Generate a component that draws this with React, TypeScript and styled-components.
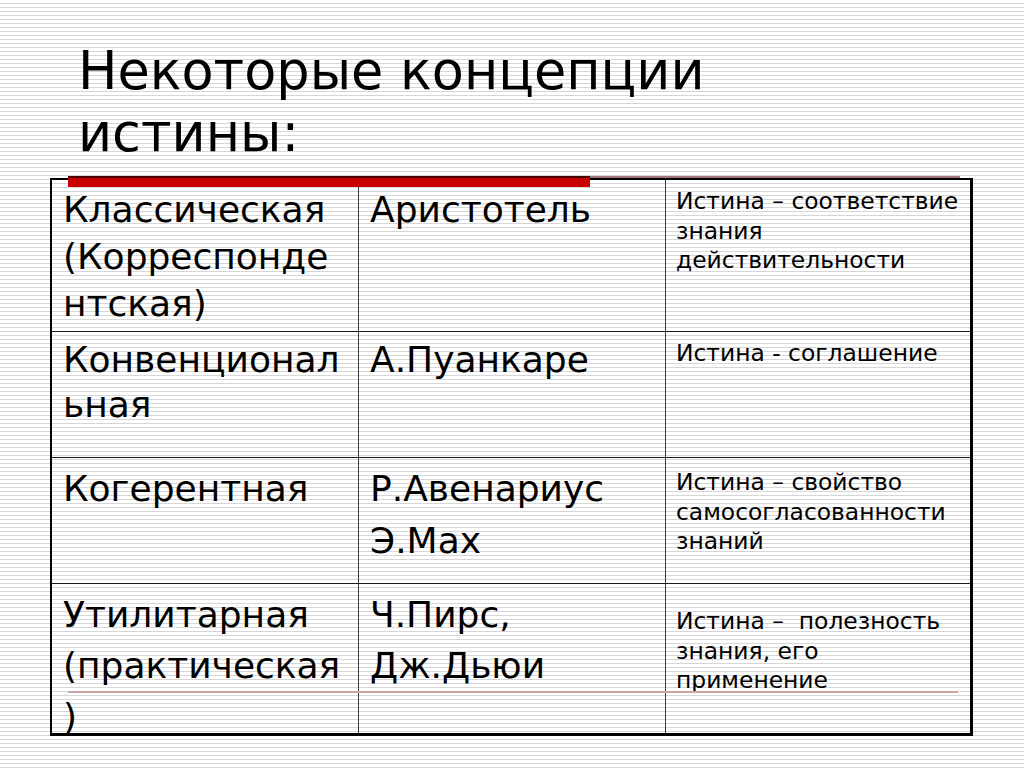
import styled, { createGlobalStyle } from 'styled-components'

const GlobalStyle = createGlobalStyle`
  html, body {
    margin: 0;
    padding: 0;
    background: #fff;
  }
  body {
    font-family: "DejaVu Sans", Verdana, sans-serif;
    color: #000;
  }
`

type Row = {
  concept: string[][]
  authors: string[][]
  idea: string[]
  lead: number
  top: number
  ideaTop: number
}

const rows: Row[] = [
  {
    concept: [['Классическая'], ['(Корреспонде', 'нтская)']],
    authors: [['Аристотель']],
    idea: ['Истина – соответствие', 'знания', 'действительности'],
    lead: 47,
    top: 6,
    ideaTop: 7,
  },
  {
    concept: [['Конвенционал', 'ьная']],
    authors: [['А.Пуанкаре']],
    idea: ['Истина - соглашение'],
    lead: 45,
    top: 5,
    ideaTop: 7,
  },
  {
    concept: [['Когерентная']],
    authors: [['Р.Авенариус'], ['Э.Мах']],
    idea: ['Истина – свойство', 'самосогласованности', 'знаний'],
    lead: 52,
    top: 5,
    ideaTop: 10,
  },
  {
    concept: [['Утилитарная'], ['(практическая', ')']],
    authors: [['Ч.Пирс,'], ['Дж.Дьюи']],
    idea: ['Истина –\u00a0 полезность', 'знания, его', 'применение'],
    lead: 51,
    top: 5,
    ideaTop: 23,
  },
]

export default function App() {
  return (
    <>
      <GlobalStyle />
      <Slide>
        <Title>
          Некоторые концепции
          <br />
          истины:
        </Title>
        <Table>
          {rows.map((row, i) => {
            const lastRow = i === rows.length - 1
            return [
              <Cell key={`c${i}`} $lastRow={lastRow} $lead={row.lead} $top={row.top}>
                {row.concept.map((p, j) => (
                  <Para key={j}>
                    {p.map((line, k) => (
                      <Line key={k}>{line}</Line>
                    ))}
                  </Para>
                ))}
              </Cell>,
              <Cell key={`a${i}`} $lastRow={lastRow} $lead={row.lead} $top={row.top}>
                {row.authors.map((p, j) => (
                  <Para key={j}>
                    {p.map((line, k) => (
                      <Line key={k}>{line}</Line>
                    ))}
                  </Para>
                ))}
              </Cell>,
              <Cell key={`i${i}`} $lastRow={lastRow} $lastCol $small $top={row.ideaTop}>
                {row.idea.map((line, k) => (
                  <Line key={k}>{line}</Line>
                ))}
              </Cell>,
            ]
          })}
        </Table>
        <RedBar />
        <TopRule />
        <BottomRule />
      </Slide>
    </>
  )
}

const Slide = styled.div`
  position: relative;
  width: 1024px;
  height: 768px;
  overflow: hidden;
  box-sizing: border-box;
  padding-top: 40px;
  background: repeating-linear-gradient(
    to bottom,
    #ffffff 0px,
    #ffffff 2.6px,
    #d6d6d6 2.6px,
    #d6d6d6 4px
  );
`

const Title = styled.h1`
  margin: 0 0 0 78px;
  font-size: 52.5px;
  line-height: 62px;
  font-weight: normal;
`

const Table = styled.div`
  display: grid;
  grid-template-columns: 307px 307px 304px;
  grid-template-rows: 152px 126px 126px 149px;
  box-sizing: border-box;
  width: 923px;
  margin: 14px 0 0 50px;
  border-style: solid;
  border-color: #000;
  border-width: 2px 3px 3px 2px;
`

const Cell = styled.div<{
  $lastRow?: boolean
  $lastCol?: boolean
  $small?: boolean
  $top: number
  $lead?: number
}>`
  box-sizing: border-box;
  padding: ${({ $top }) => $top}px 0 0 ${({ $small }) => ($small ? 10 : 11)}px;
  border-right: ${({ $lastCol }) => ($lastCol ? 'none' : '1px solid #3a3a3a')};
  border-bottom: ${({ $lastRow }) => ($lastRow ? 'none' : '1px solid #1a1a1a')};
  font-size: ${({ $small }) => ($small ? '23.4px' : '36px')};
  line-height: ${({ $small, $lead }) => ($small ? '29.5px' : `${$lead ?? 46}px`)};
  white-space: nowrap;
`

const Para = styled.div``

const Line = styled.div``

const RedBar = styled.div`
  position: absolute;
  left: 68px;
  top: 176px;
  width: 522px;
  height: 11px;
  background: linear-gradient(to bottom, #4a0000 0px, #4a0000 2px, #c80000 2px);
`

const TopRule = styled.div`
  position: absolute;
  left: 590px;
  top: 176px;
  width: 370px;
  height: 2px;
  background: #a3747c;
`

const BottomRule = styled.div`
  position: absolute;
  left: 68px;
  top: 691px;
  width: 890px;
  height: 2px;
  background: #c9a5a5;
`
